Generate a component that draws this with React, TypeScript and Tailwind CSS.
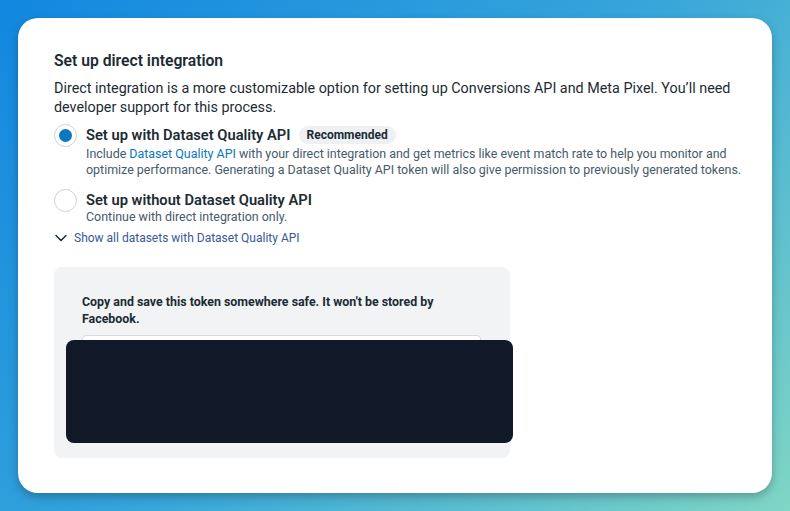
import React from "react";

function Radio({ checked }: { checked: boolean }) {
  return (
    <div className="w-[23px] h-[23px] shrink-0 rounded-full border border-[#cbd2d9] bg-white flex items-center justify-center">
      {checked && <div className="w-[13px] h-[13px] rounded-full bg-[#0a78be]" />}
    </div>
  );
}

export default function App() {
  return (
    <div
      className="w-[790px] h-[511px] p-[18px] bg-[linear-gradient(135deg,#1287e0_0%,#36a5da_50%,#80d6c4_100%)]"
      style={{ fontFamily: "Roboto, 'Liberation Sans', sans-serif" }}
    >
      <div className="w-[754px] h-[475px] bg-white rounded-[20px] shadow-[0_4px_10px_rgba(0,0,0,0.25)] pt-[33px] px-[36px] text-[#1c2b33]">
        <h2 className="text-[15.7px] leading-[20px] font-semibold">Set up direct integration</h2>
        <p className="mt-2 text-[14.35px] leading-[19px] whitespace-nowrap">
          Direct integration is a more customizable option for setting up Conversions API and Meta Pixel. You’ll need
          <br />
          developer support for this process.
        </p>

        <div className="mt-[7px] flex gap-[9px]">
          <Radio checked />
          <div>
            <div className="flex items-center h-[22px]">
              <span className="text-[14.7px] font-semibold">Set up with Dataset Quality API</span>
              <span className="ml-2 h-[18px] px-2 rounded-full bg-[#eef1f4] text-[12px] font-bold leading-[18px]">
                Recommended
              </span>
            </div>
            <p className="text-[12.45px] leading-[16px] text-[#465a69] whitespace-nowrap">
              Include <span className="text-[#0a78be]">Dataset Quality API</span> with your direct integration and get metrics like event match rate to help you monitor and
              <br />
              optimize performance. Generating a Dataset Quality API token will also give permission to previously generated tokens.
            </p>
          </div>
        </div>

        <div className="mt-[11px] flex gap-[9px]">
          <Radio checked={false} />
          <div>
            <div className="flex items-center h-[22px]">
              <span className="text-[14.7px] font-semibold">Set up without Dataset Quality API</span>
            </div>
            <p className="-mt-[2px] text-[12.45px] leading-[16px] text-[#465a69]">Continue with direct integration only.</p>
          </div>
        </div>

        <div className="mt-[5px] flex items-center gap-[6px] h-[16px] text-[12px] text-[#385898]">
          <svg width="14" height="14" viewBox="0 0 14 14">
            <path d="M2 4.5 L7 9.5 L12 4.5" fill="none" stroke="#1c2b33" strokeWidth="1.5" strokeLinecap="round" strokeLinejoin="round" />
          </svg>
          <span>Show all datasets with Dataset Quality API</span>
        </div>

        <div className="relative mt-[21px] w-[456px] h-[191px] rounded-[8px] bg-[#f1f3f5] pt-[26px] pl-[28px] pr-[29px]">
          <p className="text-[12.4px] leading-[17px] font-bold">
            Copy and save this token somewhere safe. It won't be stored by
            <br />
            Facebook.
          </p>
          <div className="mt-2 h-[36px] bg-white border border-[#d5dbe0] rounded-[4px]" />
          <div className="absolute left-[12px] top-[73px] w-[447px] h-[103px] rounded-[8px] bg-[#111827]" />
        </div>
      </div>
    </div>
  );
}
